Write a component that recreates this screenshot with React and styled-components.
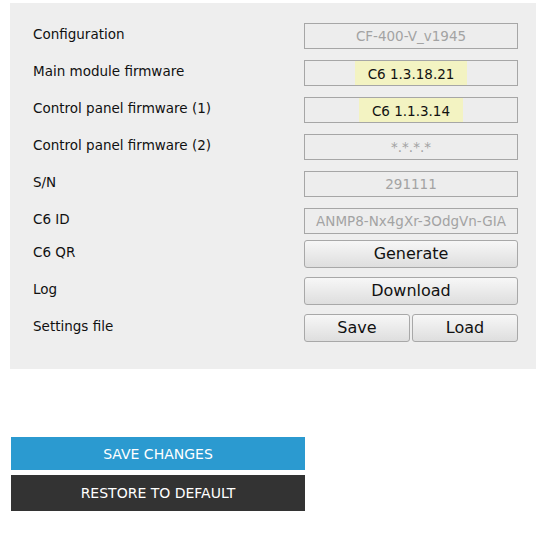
import styled, { createGlobalStyle } from "styled-components";

const GlobalStyle = createGlobalStyle`
  body {
    margin: 0;
    background: #ffffff;
    font-family: "DejaVu Sans", Verdana, sans-serif;
  }
`;

const rows = [
  { label: "Configuration", value: "CF-400-V_v1945", muted: true },
  { label: "Main module firmware", value: "C6 1.3.18.21", highlight: true },
  { label: "Control panel firmware (1)", value: "C6 1.1.3.14", highlight: true },
  { label: "Control panel firmware (2)", value: "*.*.*.*", muted: true },
  { label: "S/N", value: "291111", muted: true },
  { label: "C6 ID", value: "ANMP8-Nx4gXr-3OdgVn-GIA", muted: true },
];

export default function App() {
  return (
    <Page>
      <GlobalStyle />
      <Panel>
        {rows.map((row) => (
          <Row key={row.label}>
            <Label>{row.label}</Label>
            <Field $muted={row.muted}>
              {row.highlight ? <Mark>{row.value}</Mark> : row.value}
            </Field>
          </Row>
        ))}
        <Tools>
          <Row>
            <Label>C6 QR</Label>
            <ButtonGroup>
              <Button type="button">Generate</Button>
            </ButtonGroup>
          </Row>
          <Row>
            <Label>Log</Label>
            <ButtonGroup>
              <Button type="button">Download</Button>
            </ButtonGroup>
          </Row>
          <Row>
            <Label>Settings file</Label>
            <ButtonGroup>
              <Button type="button">Save</Button>
              <Button type="button">Load</Button>
            </ButtonGroup>
          </Row>
        </Tools>
      </Panel>
      <Actions>
        <ActionButton type="button" $variant="primary">
          SAVE CHANGES
        </ActionButton>
        <ActionButton type="button">RESTORE TO DEFAULT</ActionButton>
      </Actions>
    </Page>
  );
}

const Page = styled.div`
  padding: 3px 0 0 10px;
`;

const Panel = styled.div`
  width: 526px;
  box-sizing: border-box;
  background: #eeeeee;
  padding: 14px 0 23px 23px;
`;

const Row = styled.div`
  display: flex;
  align-items: center;
  height: 37px;
`;

const Tools = styled.div`
  margin-top: -4px;
`;

const Label = styled.div`
  width: 271px;
  font-size: 13.5px;
  color: #111111;
  padding-bottom: 3px;
`;

const Field = styled.div`
  width: 214px;
  height: 26px;
  box-sizing: border-box;
  border: 1px solid #a6a6a6;
  background: #ededed;
  display: flex;
  align-items: stretch;
  justify-content: center;
  font-size: 13.5px;
  line-height: 24px;
  white-space: nowrap;
  overflow: hidden;
  color: ${(p) => (p.$muted ? "#a3a3a3" : "#111111")};
`;

const Mark = styled.span`
  background: #f3f3c2;
  padding: 1px 13px 0;
`;

const ButtonGroup = styled.div`
  width: 214px;
  display: flex;
  gap: 2px;
`;

const Button = styled.button`
  flex: 1;
  height: 28px;
  box-sizing: border-box;
  border: 1px solid #a8a8a8;
  border-radius: 3px;
  background: linear-gradient(#f7f7f7, #dedede);
  font-family: "DejaVu Sans", Verdana, sans-serif;
  font-size: 16px;
  color: #111111;
  padding: 0;
`;

const Actions = styled.div`
  margin-top: 68px;
  margin-left: 1px;
  display: flex;
  flex-direction: column;
  gap: 5px;
  width: 294px;
`;

const ActionButton = styled.button`
  height: ${(p) => (p.$variant === "primary" ? "33px" : "36px")};
  border: none;
  background: ${(p) => (p.$variant === "primary" ? "#2b9ad0" : "#333333")};
  color: #ffffff;
  font-family: "DejaVu Sans", Verdana, sans-serif;
  font-size: 14px;
  padding: 0;
`;
